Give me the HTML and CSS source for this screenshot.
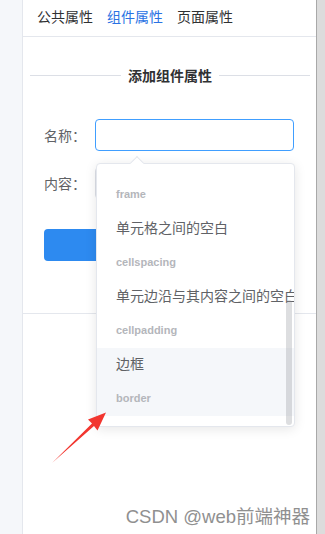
FILE: index.html
```html
<!DOCTYPE html>
<html>

<head>
	<title>组件属性</title>
	<meta name="viewport" content="width=device-width, initial-scale=1.0">
	<link rel="stylesheet" href="styles.css">
</head>

<body>
	<div class="page">
		<aside class="side"></aside>

		<main class="panel">
			<!-- top tabs -->
			<nav class="tabs">
				<span class="tab">公共属性</span>
				<span class="tab active">组件属性</span>
				<span class="tab">页面属性</span>
			</nav>

			<div class="divider"><span>添加组件属性</span></div>

			<form class="form">
				<div class="row">
					<label class="label">名称：</label>
					<div class="field">
						<input class="input focused" type="text">

						<!-- autocomplete dropdown, opened under the name input -->
						<div class="dropdown">
							<div class="options">
								<div class="option">
									<div class="opt-name">框架</div>
									<div class="opt-value">frame</div>
								</div>
								<div class="option">
									<div class="opt-name">单元格之间的空白</div>
									<div class="opt-value">cellspacing</div>
								</div>
								<div class="option">
									<div class="opt-name">单元边沿与其内容之间的空白</div>
									<div class="opt-value">cellpadding</div>
								</div>
								<div class="option hover">
									<div class="opt-name">边框</div>
									<div class="opt-value">border</div>
								</div>
								<div class="option">
									<div class="opt-name">规则</div>
									<div class="opt-value">rules</div>
								</div>
							</div>
							<div class="scroll-thumb"></div>
						</div>
					</div>
				</div>

				<div class="row">
					<label class="label">内容：</label>
					<div class="field">
						<input class="input" type="text">
					</div>
				</div>

				<div class="row actions">
					<button class="btn" type="button"></button>
				</div>
			</form>

			<div class="rule"></div>
		</main>

		<div class="gutter"></div>

		<!-- annotation arrow pointing at the list -->
		<svg class="arrow" width="325" height="534" viewBox="0 0 325 534">
			<polygon points="52,463 92,423.5 88,419.5 106,412.5 97.5,430.5 94,426" fill="#f2362f"/>
		</svg>

		<div class="watermark">CSDN @web前端神器</div>
	</div>
</body>

</html>
```

FILE: styles.css
```css
body {
    margin: 0;
    font-family: "Noto Sans CJK SC", "Noto Sans", sans-serif;
    font-size: 14px;
    color: #303133;
}

.page {
    position: relative;
    display: flex;
    height: 534px;
    overflow: hidden;
}

.side {
    width: 22px;
    background-color: #f5f7fa;
    border-right: 1px solid #e4e7ed;
}

.panel {
    width: 293px;
    background-color: #fff;
}

.gutter {
    width: 8px;
    border-left: 1px solid #a9a9a9;
    background-color: #dcdcdc;
}

/* tabs */
.tabs {
    display: flex;
    gap: 14px;
    height: 32px;
    line-height: 32px;
    padding: 0 14px 4px;
    border-bottom: 1px solid #e4e7ed;
}

.tab {
    color: #303133;
}

.tab.active {
    color: #2a72e3;
}

/* heading with side lines */
.divider {
    display: flex;
    align-items: center;
    gap: 7px;
    height: 20px;
    margin: 28px 6px 0 7px;
    font-weight: bold;
    color: #303133;
}

.divider::before,
.divider::after {
    content: "";
    flex: 1;
    height: 1px;
    background-color: #dcdfe6;
}

/* form */
.form {
    margin-top: 34px;
    padding: 0 21px;
}

.row {
    display: flex;
    align-items: center;
    height: 32px;
    margin-bottom: 16px;
}

.row.actions {
    margin-top: 30px;
    margin-bottom: 0;
}

.label {
    width: 51px;
    color: #606266;
}

.field {
    position: relative;
    width: 199px;
}

.input {
    box-sizing: border-box;
    width: 199px;
    height: 32px;
    border: 1px solid #dcdfe6;
    border-radius: 4px;
    outline: none;
    background: #fff;
}

.input.focused {
    border-color: #409eff;
}

.btn {
    width: 250px;
    height: 32px;
    border: none;
    border-radius: 4px;
    background-color: #2d8af0;
}

.rule {
    margin-top: 52px;
    border-top: 1px solid #e4e7ed;
}

/* dropdown */
.dropdown {
    position: absolute;
    top: 44px;
    left: 1px;
    box-sizing: border-box;
    width: 199px;
    height: 264px;
    padding: 6px 0;
    border: 1px solid #e4e7ed;
    border-radius: 4px;
    background-color: #fff;
    box-shadow: 0 2px 12px rgba(0, 0, 0, 0.1);
    z-index: 2;
}

/* little pointer on top */
.dropdown::before {
    content: "";
    position: absolute;
    top: -6px;
    left: 35px;
    width: 9px;
    height: 9px;
    background-color: #fff;
    border-top: 1px solid #e4e7ed;
    border-left: 1px solid #e4e7ed;
    transform: rotate(45deg);
}

.options {
    height: 100%;
    overflow: hidden;
}

.options .option:first-child {
    margin-top: -26px;
}

.option {
    padding: 0 19px;
    white-space: nowrap;
    overflow: hidden;
}

.option.hover {
    background-color: #f5f7fa;
}

.opt-name {
    line-height: 31px;
    padding-bottom: 1px;
    color: #606266;
}

.opt-value {
    line-height: 36px;
    font-family: "Liberation Sans", Arial, sans-serif;
    font-size: 11px;
    font-weight: bold;
    color: #b4b6bb;
}

.scroll-thumb {
    position: absolute;
    top: 136px;
    right: 2px;
    width: 6px;
    height: 125px;
    border-radius: 3px;
    background-color: rgba(144, 147, 153, 0.3);
}

/* overlay bits */
.arrow {
    position: absolute;
    top: 0;
    left: 0;
    z-index: 3;
}

.watermark {
    position: absolute;
    right: 15px;
    bottom: 6px;
    font-family: "Liberation Sans", "Noto Sans CJK SC", sans-serif;
    font-size: 18.5px;
    color: #909090;
    text-shadow: 1px 1px 0 #fff;
    z-index: 3;
}
```
